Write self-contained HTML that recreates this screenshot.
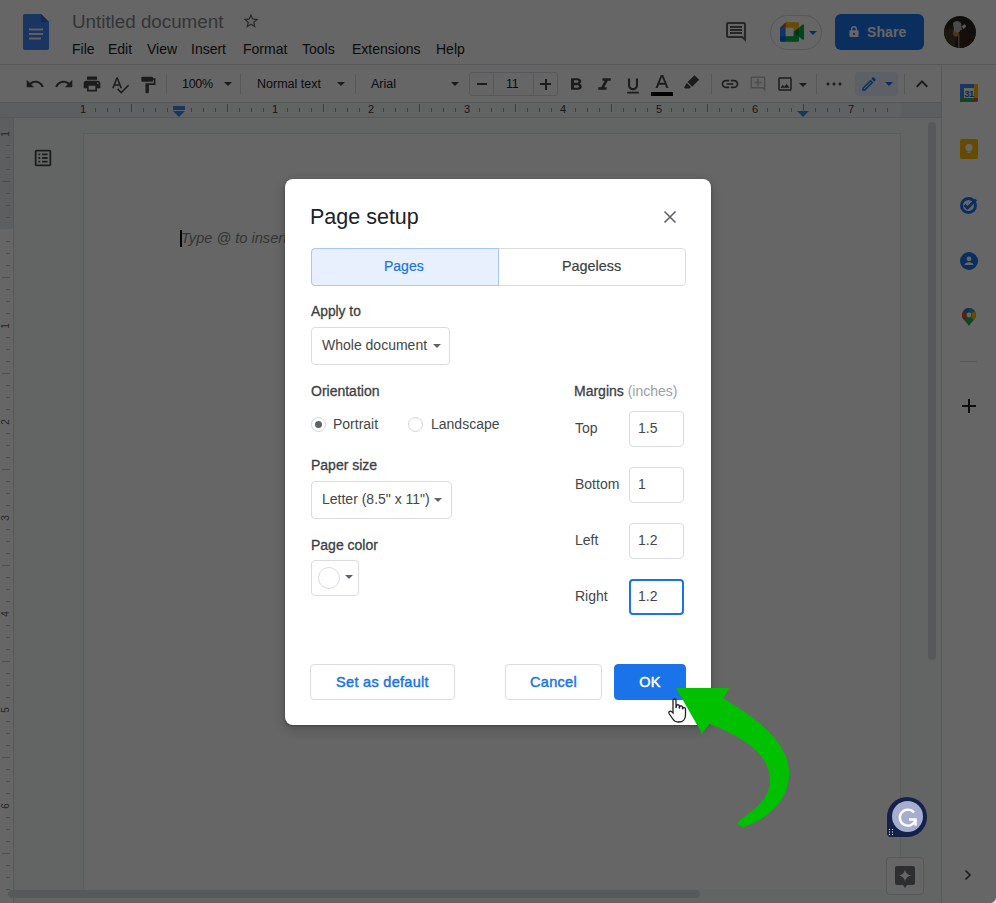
<!DOCTYPE html>
<html><head><meta charset="utf-8">
<style>
*{box-sizing:border-box;margin:0;padding:0}
html,body{width:996px;height:903px;overflow:hidden;background:#f8f9fa;font-family:"Liberation Sans",sans-serif;position:relative}
.a{position:absolute}
svg{display:block}
#hdr{left:0;top:0;width:996px;height:65px;background:#fff;border-bottom:1px solid #dadce0}
#title{left:72px;top:12px;font-size:18.8px;color:#80868b;white-space:nowrap;line-height:20px}
.menu{top:41px;font-size:14px;color:#202124;white-space:nowrap;line-height:16px}
#tb{left:0;top:65px;width:941px;height:38px;background:#fff;border-bottom:1px solid #dadce0}
.sep{width:1px;height:20px;top:74px;background:#dadce0}
.tt{font-size:12.5px;color:#202124;white-space:nowrap;line-height:14px;top:77px}
.dd{width:0;height:0;border-left:4px solid transparent;border-right:4px solid transparent;border-top:4px solid #444}
#ruler{left:0;top:103px;width:941px;height:15px;background:#e8eaed;border-bottom:1px solid #dadce0}
#rpage{left:83px;top:103px;width:818px;height:14px;background:#f1f3f4}
#rcontent{left:179px;top:103px;width:624px;height:14px;background:#f6f7f8}
#vruler{left:0;top:118px;width:14px;height:785px;background:#fff;border-right:1px solid #dadce0}
#vmargin{left:0;top:118px;width:13px;height:111px;background:#e8eaed}
#page{left:83px;top:133px;width:818px;height:756px;background:#fff;border:1px solid #e3e5e8;border-bottom:none}
#side{left:941px;top:65px;width:55px;height:838px;background:#fff;border-left:1px solid #dadce0}
#ov{left:0;top:0;width:996px;height:903px;background:rgba(0,0,0,0.6)}
#dlg{left:285px;top:179px;width:426px;height:546px;background:#fff;border-radius:8px;color:#3c4043;box-shadow:0 1px 3px 0 rgba(0,0,0,.3),0 4px 8px 3px rgba(0,0,0,.12)}
.lbl{font-size:14px;color:#3c4043;white-space:nowrap;line-height:16px;-webkit-text-stroke:0.3px #3c4043}
.txt{font-size:14px;color:#444746;white-space:nowrap;line-height:16px}
.box{border:1px solid #dadce0;border-radius:4px;background:#fff}
.btn{border:1px solid #dadce0;border-radius:4px;background:#fff;color:#1a73e8;font-size:14.5px;text-align:center;line-height:35px;letter-spacing:0.3px;-webkit-text-stroke:0.45px #1a73e8}
.tick{width:1px;background:#9aa0a6}
.rn{width:20px;text-align:center;font-size:11px;line-height:10px;color:#3c4043}
.vn{width:20px;text-align:center;font-size:10px;line-height:10px;color:#5f6368;transform:rotate(-90deg)}
.vt{background:#bdc1c6}
</style></head><body>
<div id="hdr" class="a"></div>
<!-- docs logo -->
<svg class="a" style="left:23px;top:14px" width="26" height="36" viewBox="0 0 26 36">
<path d="M2 0h16l8 8v26a2 2 0 0 1-2 2H2a2 2 0 0 1-2-2V2a2 2 0 0 1 2-2z" fill="#4285f4"/>
<path d="M18 0l8 8h-8z" fill="#3367d6"/>
<rect x="6" y="14.5" width="14" height="2" fill="#f1f1f1"/><rect x="6" y="19" width="14" height="2" fill="#f1f1f1"/><rect x="6" y="23.5" width="12" height="2" fill="#f1f1f1"/>
</svg>
<div id="title" class="a">Untitled document</div>
<svg class="a" style="left:242px;top:12px" width="18" height="18" viewBox="0 0 24 24"><path fill="#5f6368" d="M22 9.24l-7.19-.62L12 2 9.19 8.63 2 9.24l5.46 4.73L5.82 21 12 17.27 18.18 21l-1.63-7.03L22 9.24zM12 15.4l-3.76 2.27 1-4.28-3.32-2.88 4.38-.38L12 6.1l1.71 4.04 4.38.38-3.32 2.88 1 4.28L12 15.4z"/></svg>
<div class="a menu" style="left:72px">File</div>
<div class="a menu" style="left:108px">Edit</div>
<div class="a menu" style="left:147px">View</div>
<div class="a menu" style="left:191px">Insert</div>
<div class="a menu" style="left:243px">Format</div>
<div class="a menu" style="left:302px">Tools</div>
<div class="a menu" style="left:352px">Extensions</div>
<div class="a menu" style="left:436px">Help</div>
<!-- header right -->
<svg class="a" style="left:724px;top:20px" width="24" height="24" viewBox="0 0 24 24"><path fill="#5f6368" d="M21.99 4c0-1.1-.89-2-1.99-2H4c-1.1 0-2 .9-2 2v12c0 1.1.9 2 2 2h14l4 4-.01-18zM20 4v13.17L18.83 16H4V4h16zM6 12h12v2H6zm0-3h12v2H6zm0-3h12v2H6z"/></svg>
<div class="a" style="left:770px;top:15px;width:52px;height:35px;border:1px solid #dadce0;border-radius:18px;background:#fff"></div>
<svg class="a" style="left:780px;top:22px" width="24" height="20" viewBox="0 0 87.5 72"><path fill="#00832d" d="M49.5 36l8.53 9.75 11.47 7.33 2-17.02-2-16.64-11.69 6.44z"/><path fill="#0066da" d="M0 51.5V66c0 3.315 2.685 6 6 6h14.5l3-10.96-3-9.54-9.95-3z"/><path fill="#e94235" d="M20.5 0L0 20.5l10.55 3 9.95-3 2.95-9.41z"/><path fill="#2684fc" d="M20.5 20.5H0v31h20.5z"/><path fill="#00ac47" d="M82.6 8.68L69.5 19.42v33.66l13.16 10.79c1.97 1.54 4.85.135 4.85-2.37V11c0-2.535-2.945-3.925-4.91-2.32zM49.5 36v15.5h-29V72h43c3.315 0 6-2.685 6-6V53.08z"/><path fill="#ffba00" d="M63.5 0h-43v20.5h29V36l20-16.57V6c0-3.315-2.685-6-6-6z"/></svg>
<div class="a dd" style="left:809px;top:31px;border-top-color:#1a73e8"></div>
<div class="a" style="left:835px;top:14px;width:89px;height:36px;background:#1a73e8;border-radius:6px"></div>
<svg class="a" style="left:849px;top:26px" width="10" height="11" viewBox="0 0 10 11"><path fill="#fff" d="M8.6 4.3H8V3a3 3 0 0 0-6 0v1.3h-.6A1 1 0 0 0 .4 5.3v4.7a1 1 0 0 0 1 1h7.2a1 1 0 0 0 1-1V5.3a1 1 0 0 0-1-1zM3.4 3a1.6 1.6 0 0 1 3.2 0v1.3H3.4zM5 9a1.1 1.1 0 1 1 0-2.2A1.1 1.1 0 0 1 5 9z"/></svg>
<div class="a" style="left:867px;top:24px;font-size:14px;font-weight:bold;color:#fff;line-height:16px;letter-spacing:0.1px">Share</div>
<svg class="a" style="left:944px;top:16px" width="32" height="32" viewBox="0 0 32 32"><defs><clipPath id="cav"><circle cx="16" cy="16" r="16"/></clipPath></defs><g clip-path="url(#cav)"><rect width="32" height="32" fill="#2a2520"/><path d="M0 14Q8 10 14 16L10 32H0z" fill="#4a3a2a"/><ellipse cx="12" cy="17" rx="3" ry="3.5" fill="#c08a30"/><path d="M9 7Q13 3 17 7L18 14Q14 18 10 15z" fill="#b8b8b8"/><path d="M18 10l3-2 1 3-3 2z" fill="#e0e0e0"/><path d="M16 14L26 16 32 20V32H18z" fill="#3a2418"/><rect x="14" y="18" width="1.5" height="14" fill="#8a7a6a"/></g></svg>

<!-- toolbar -->
<div id="tb" class="a"></div>
<svg class="a" style="left:25px;top:74px" width="20" height="20" viewBox="0 0 24 24"><path fill="#444746" d="M12.5 8c-2.65 0-5.05.99-6.9 2.6L2 7v9h9l-3.62-3.62c1.39-1.16 3.16-1.88 5.12-1.88 3.54 0 6.55 2.31 7.6 5.5l2.37-.78C21.08 11.03 17.15 8 12.5 8z"/></svg>
<svg class="a" style="left:54px;top:74px" width="20" height="20" viewBox="0 0 24 24"><path fill="#444746" d="M18.4 10.6C16.55 8.99 14.15 8 11.5 8c-4.65 0-8.58 3.03-9.96 7.22L3.9 16c1.05-3.19 4.05-5.5 7.6-5.5 1.95 0 3.73.72 5.12 1.88L13 16h9V7l-3.6 3.6z"/></svg>
<svg class="a" style="left:82px;top:74px" width="20" height="20" viewBox="0 0 24 24"><path fill="#444746" d="M19 8H5c-1.66 0-3 1.34-3 3v6h4v4h12v-4h4v-6c0-1.66-1.34-3-3-3zm-3 11H8v-5h8v5zm3-7c-.55 0-1-.45-1-1s.45-1 1-1 1 .45 1 1-.45 1-1 1zm-1-9H6v4h12V3z"/></svg>
<svg class="a" style="left:110px;top:75px" width="20" height="20" viewBox="0 0 24 24"><path fill="#444746" d="M12.45 16h2.09L9.43 3H7.57L2.46 16h2.09l1.12-3h5.64l1.14 3zm-6.02-5L8.5 5.48 10.57 11H6.43zm15.16.59l-8.09 8.09L9.83 16l-1.41 1.41 5.09 5.09L23 13l-1.41-1.41z"/></svg>
<svg class="a" style="left:138px;top:75px" width="20" height="20" viewBox="0 0 24 24"><path fill="#444746" d="M18 4V3c0-.55-.45-1-1-1H5c-.55 0-1 .45-1 1v4c0 .55.45 1 1 1h12c.55 0 1-.45 1-1V6h1v4H9v11c0 .55.45 1 1 1h2c.55 0 1-.45 1-1v-9h8V4h-3z"/></svg>
<div class="a sep" style="left:166px"></div>
<div class="a tt" style="left:182px;letter-spacing:-0.3px">100%</div>
<div class="a dd" style="left:224px;top:82px"></div>
<div class="a sep" style="left:240px"></div>
<div class="a tt" style="left:257px">Normal text</div>
<div class="a dd" style="left:337px;top:82px"></div>
<div class="a sep" style="left:355px"></div>
<div class="a tt" style="left:371px">Arial</div>
<div class="a dd" style="left:451px;top:82px"></div>
<div class="a" style="left:469px;top:72px;width:89px;height:24px;border:1px solid #dadce0;border-radius:3px"></div>
<div class="a" style="left:493px;top:72px;width:1px;height:24px;background:#dadce0"></div>
<div class="a" style="left:533px;top:72px;width:1px;height:24px;background:#dadce0"></div>
<div class="a" style="left:477px;top:83px;width:10px;height:2px;background:#444746"></div>
<div class="a tt" style="left:506px;top:77px;letter-spacing:-0.3px">11</div>
<div class="a" style="left:540px;top:83px;width:11px;height:2px;background:#444746"></div>
<div class="a" style="left:544.5px;top:78.5px;width:2px;height:11px;background:#444746"></div>
<svg class="a" style="left:564px;top:74.7px" width="24" height="19.7" viewBox="0 0 24 24" preserveAspectRatio="none"><path fill="#444746" d="M15.6 10.79c.97-.67 1.65-1.77 1.65-2.79 0-2.26-1.75-4-4-4H7v14h7.04c2.09 0 3.71-1.7 3.71-3.79 0-1.52-.86-2.82-2.1-3.42zM10 6.5h3c.83 0 1.5.67 1.5 1.5s-.67 1.5-1.5 1.5h-3v-3zm3.5 9H10v-3h3.5c.83 0 1.5.67 1.5 1.5s-.67 1.5-1.5 1.5z"/></svg>
<svg class="a" style="left:592.3px;top:74.7px" width="25" height="19.7" viewBox="0 0 24 24" preserveAspectRatio="none"><path fill="#444746" d="M10 4v3h2.21l-3.42 8H6v3h8v-3h-2.21l3.42-8H18V4z"/></svg>
<svg class="a" style="left:621px;top:76px" width="24" height="20" viewBox="0 0 24 24"><path fill="#444746" d="M12 17c3.31 0 6-2.69 6-6V3h-2.5v8c0 1.93-1.57 3.5-3.5 3.5S8.5 12.93 8.5 11V3H6v8c0 3.31 2.69 6 6 6zm-7 2v2h14v-2H5z"/></svg>
<svg class="a" style="left:651px;top:75px" width="22" height="14" viewBox="0 0 22 14"><path fill="#444746" d="M4.5 13h2.2l1.2-3.3h6.2l1.2 3.3h2.2L12.2 0H9.8zM8.6 7.8L11 1.9l2.4 5.9z"/></svg>
<div class="a" style="left:651px;top:92px;width:22px;height:4px;background:#000"></div>
<svg class="a" style="left:683px;top:74px" width="18" height="16" viewBox="0 0 18 16"><path fill="#444746" d="M11.5 1.2l4.6 4.6-6.9 6.9-4.6-4.6zM3.8 8.9l4.1 4.1-1.4 1.4H2.1l-1-1z"/></svg>
<div class="a sep" style="left:711px"></div>
<svg class="a" style="left:719px;top:74px" width="22" height="20" viewBox="0 0 24 24"><path fill="#444746" d="M3.9 12c0-1.71 1.39-3.1 3.1-3.1h4V7H7c-2.76 0-5 2.24-5 5s2.24 5 5 5h4v-1.9H7c-1.71 0-3.1-1.39-3.1-3.1zM8 13h8v-2H8v2zm9-6h-4v1.9h4c1.71 0 3.1 1.39 3.1 3.1s-1.39 3.1-3.1 3.1h-4V17h4c2.76 0 5-2.24 5-5s-2.24-5-5-5z"/></svg>
<svg class="a" style="left:749px;top:75px" width="18" height="18" viewBox="0 0 24 24"><path fill="#bdc1c6" d="M22 4c0-1.1-.9-2-2-2H4c-1.1 0-1.99.9-1.99 2L2 16c0 1.1.9 2 2 2h14l4 4-.01-18zm-2 13.17L18.83 16H4V4h16v13.17zM13 5h-2v4H7v2h4v4h2v-4h4V9h-4z"/></svg>
<svg class="a" style="left:776px;top:75px" width="18" height="18" viewBox="0 0 24 24"><path fill="#444746" d="M19 5v14H5V5h14m0-2H5c-1.1 0-2 .9-2 2v14c0 1.1.9 2 2 2h14c1.1 0 2-.9 2-2V5c0-1.1-.9-2-2-2zm-4.86 8.86l-3 3.87L9 13.14 6 17h12l-3.86-5.14z"/></svg>
<div class="a dd" style="left:799px;top:83px"></div>
<div class="a sep" style="left:816px"></div>
<svg class="a" style="left:822px;top:72px" width="24" height="24" viewBox="0 0 24 24"><path fill="#444746" d="M6 10.5c-.83 0-1.5.67-1.5 1.5s.67 1.5 1.5 1.5 1.5-.67 1.5-1.5-.67-1.5-1.5-1.5zm12 0c-.83 0-1.5.67-1.5 1.5s.67 1.5 1.5 1.5 1.5-.67 1.5-1.5-.67-1.5-1.5-1.5zm-6 0c-.83 0-1.5.67-1.5 1.5s.67 1.5 1.5 1.5 1.5-.67 1.5-1.5-.67-1.5-1.5-1.5z"/></svg>
<div class="a" style="left:855px;top:72px;width:43px;height:24px;background:#e8f0fe;border-radius:4px"></div>
<svg class="a" style="left:860px;top:75px" width="18" height="18" viewBox="0 0 24 24"><path fill="#1a73e8" d="M14.06 9.02l.92.92L5.92 19H5v-.92l9.06-9.06M17.66 3c-.25 0-.51.1-.7.29l-1.83 1.83 3.75 3.75 1.83-1.83c.39-.39.39-1.02 0-1.41l-2.34-2.34c-.2-.2-.45-.29-.71-.29zm-3.6 3.19L3 17.25V21h3.75L17.81 9.94l-3.75-3.75z"/></svg>
<div class="a dd" style="left:885px;top:82px;border-top-color:#1a73e8"></div>
<div class="a sep" style="left:904px"></div>
<svg class="a" style="left:909.7px;top:72px" width="24" height="24" viewBox="0 0 24 24"><path fill="#444746" d="M12 8l-6 6 1.41 1.41L12 10.83l4.59 4.58L18 14z"/></svg>

<!-- ruler -->
<div id="ruler" class="a"></div>
<div id="rpage" class="a"></div><div id="rcontent" class="a"></div>
<div class="a tick" style="left:95px;top:108px;height:4px"></div>
<div class="a tick" style="left:107px;top:108px;height:4px"></div>
<div class="a tick" style="left:119px;top:108px;height:4px"></div>
<div class="a tick" style="left:131px;top:104px;height:8px"></div>
<div class="a tick" style="left:143px;top:108px;height:4px"></div>
<div class="a tick" style="left:155px;top:108px;height:4px"></div>
<div class="a tick" style="left:167px;top:108px;height:4px"></div>
<div class="a tick" style="left:191px;top:108px;height:4px"></div>
<div class="a tick" style="left:203px;top:108px;height:4px"></div>
<div class="a tick" style="left:215px;top:108px;height:4px"></div>
<div class="a tick" style="left:227px;top:104px;height:8px"></div>
<div class="a tick" style="left:239px;top:108px;height:4px"></div>
<div class="a tick" style="left:251px;top:108px;height:4px"></div>
<div class="a tick" style="left:263px;top:108px;height:4px"></div>
<div class="a tick" style="left:287px;top:108px;height:4px"></div>
<div class="a tick" style="left:299px;top:108px;height:4px"></div>
<div class="a tick" style="left:311px;top:108px;height:4px"></div>
<div class="a tick" style="left:323px;top:104px;height:8px"></div>
<div class="a tick" style="left:335px;top:108px;height:4px"></div>
<div class="a tick" style="left:347px;top:108px;height:4px"></div>
<div class="a tick" style="left:359px;top:108px;height:4px"></div>
<div class="a tick" style="left:383px;top:108px;height:4px"></div>
<div class="a tick" style="left:395px;top:108px;height:4px"></div>
<div class="a tick" style="left:407px;top:108px;height:4px"></div>
<div class="a tick" style="left:419px;top:104px;height:8px"></div>
<div class="a tick" style="left:431px;top:108px;height:4px"></div>
<div class="a tick" style="left:443px;top:108px;height:4px"></div>
<div class="a tick" style="left:455px;top:108px;height:4px"></div>
<div class="a tick" style="left:479px;top:108px;height:4px"></div>
<div class="a tick" style="left:491px;top:108px;height:4px"></div>
<div class="a tick" style="left:503px;top:108px;height:4px"></div>
<div class="a tick" style="left:515px;top:104px;height:8px"></div>
<div class="a tick" style="left:527px;top:108px;height:4px"></div>
<div class="a tick" style="left:539px;top:108px;height:4px"></div>
<div class="a tick" style="left:551px;top:108px;height:4px"></div>
<div class="a tick" style="left:575px;top:108px;height:4px"></div>
<div class="a tick" style="left:587px;top:108px;height:4px"></div>
<div class="a tick" style="left:599px;top:108px;height:4px"></div>
<div class="a tick" style="left:611px;top:104px;height:8px"></div>
<div class="a tick" style="left:623px;top:108px;height:4px"></div>
<div class="a tick" style="left:635px;top:108px;height:4px"></div>
<div class="a tick" style="left:647px;top:108px;height:4px"></div>
<div class="a tick" style="left:671px;top:108px;height:4px"></div>
<div class="a tick" style="left:683px;top:108px;height:4px"></div>
<div class="a tick" style="left:695px;top:108px;height:4px"></div>
<div class="a tick" style="left:707px;top:104px;height:8px"></div>
<div class="a tick" style="left:719px;top:108px;height:4px"></div>
<div class="a tick" style="left:731px;top:108px;height:4px"></div>
<div class="a tick" style="left:743px;top:108px;height:4px"></div>
<div class="a tick" style="left:767px;top:108px;height:4px"></div>
<div class="a tick" style="left:779px;top:108px;height:4px"></div>
<div class="a tick" style="left:791px;top:108px;height:4px"></div>
<div class="a tick" style="left:803px;top:104px;height:8px"></div>
<div class="a tick" style="left:815px;top:108px;height:4px"></div>
<div class="a tick" style="left:827px;top:108px;height:4px"></div>
<div class="a tick" style="left:839px;top:108px;height:4px"></div>
<div class="a tick" style="left:863px;top:108px;height:4px"></div>
<div class="a tick" style="left:875px;top:108px;height:4px"></div>
<div class="a tick" style="left:887px;top:108px;height:4px"></div>
<div class="a rn" style="left:73px;top:104px">1</div>
<div class="a rn" style="left:265px;top:104px">1</div>
<div class="a rn" style="left:361px;top:104px">2</div>
<div class="a rn" style="left:457px;top:104px">3</div>
<div class="a rn" style="left:553px;top:104px">4</div>
<div class="a rn" style="left:649px;top:104px">5</div>
<div class="a rn" style="left:745px;top:104px">6</div>
<div class="a rn" style="left:841px;top:104px">7</div>
<svg class="a" style="left:173px;top:106px" width="12" height="11" viewBox="0 0 12 11"><rect x="0" y="0" width="12" height="4" fill="#4285f4"/><path d="M0 5h12l-6 6z" fill="#4285f4"/></svg>
<svg class="a" style="left:797px;top:111px" width="12" height="6" viewBox="0 0 12 6"><path d="M0 0h12l-6 6z" fill="#4285f4"/></svg>

<!-- canvas -->
<div id="vruler" class="a"></div>
<div id="vmargin" class="a"></div>
<div class="a vt" style="left:6px;top:145px;width:4px;height:1px"></div>
<div class="a vt" style="left:6px;top:157px;width:4px;height:1px"></div>
<div class="a vt" style="left:6px;top:169px;width:4px;height:1px"></div>
<div class="a vt" style="left:2px;top:181px;width:8px;height:1px"></div>
<div class="a vt" style="left:6px;top:193px;width:4px;height:1px"></div>
<div class="a vt" style="left:6px;top:205px;width:4px;height:1px"></div>
<div class="a vt" style="left:6px;top:217px;width:4px;height:1px"></div>
<div class="a vt" style="left:6px;top:241px;width:4px;height:1px"></div>
<div class="a vt" style="left:6px;top:253px;width:4px;height:1px"></div>
<div class="a vt" style="left:6px;top:265px;width:4px;height:1px"></div>
<div class="a vt" style="left:2px;top:277px;width:8px;height:1px"></div>
<div class="a vt" style="left:6px;top:289px;width:4px;height:1px"></div>
<div class="a vt" style="left:6px;top:301px;width:4px;height:1px"></div>
<div class="a vt" style="left:6px;top:313px;width:4px;height:1px"></div>
<div class="a vt" style="left:6px;top:337px;width:4px;height:1px"></div>
<div class="a vt" style="left:6px;top:349px;width:4px;height:1px"></div>
<div class="a vt" style="left:6px;top:361px;width:4px;height:1px"></div>
<div class="a vt" style="left:2px;top:373px;width:8px;height:1px"></div>
<div class="a vt" style="left:6px;top:385px;width:4px;height:1px"></div>
<div class="a vt" style="left:6px;top:397px;width:4px;height:1px"></div>
<div class="a vt" style="left:6px;top:409px;width:4px;height:1px"></div>
<div class="a vt" style="left:6px;top:433px;width:4px;height:1px"></div>
<div class="a vt" style="left:6px;top:445px;width:4px;height:1px"></div>
<div class="a vt" style="left:6px;top:457px;width:4px;height:1px"></div>
<div class="a vt" style="left:2px;top:469px;width:8px;height:1px"></div>
<div class="a vt" style="left:6px;top:481px;width:4px;height:1px"></div>
<div class="a vt" style="left:6px;top:493px;width:4px;height:1px"></div>
<div class="a vt" style="left:6px;top:505px;width:4px;height:1px"></div>
<div class="a vt" style="left:6px;top:529px;width:4px;height:1px"></div>
<div class="a vt" style="left:6px;top:541px;width:4px;height:1px"></div>
<div class="a vt" style="left:6px;top:553px;width:4px;height:1px"></div>
<div class="a vt" style="left:2px;top:565px;width:8px;height:1px"></div>
<div class="a vt" style="left:6px;top:577px;width:4px;height:1px"></div>
<div class="a vt" style="left:6px;top:589px;width:4px;height:1px"></div>
<div class="a vt" style="left:6px;top:601px;width:4px;height:1px"></div>
<div class="a vt" style="left:6px;top:625px;width:4px;height:1px"></div>
<div class="a vt" style="left:6px;top:637px;width:4px;height:1px"></div>
<div class="a vt" style="left:6px;top:649px;width:4px;height:1px"></div>
<div class="a vt" style="left:2px;top:661px;width:8px;height:1px"></div>
<div class="a vt" style="left:6px;top:673px;width:4px;height:1px"></div>
<div class="a vt" style="left:6px;top:685px;width:4px;height:1px"></div>
<div class="a vt" style="left:6px;top:697px;width:4px;height:1px"></div>
<div class="a vt" style="left:6px;top:721px;width:4px;height:1px"></div>
<div class="a vt" style="left:6px;top:733px;width:4px;height:1px"></div>
<div class="a vt" style="left:6px;top:745px;width:4px;height:1px"></div>
<div class="a vt" style="left:2px;top:757px;width:8px;height:1px"></div>
<div class="a vt" style="left:6px;top:769px;width:4px;height:1px"></div>
<div class="a vt" style="left:6px;top:781px;width:4px;height:1px"></div>
<div class="a vt" style="left:6px;top:793px;width:4px;height:1px"></div>
<div class="a vt" style="left:6px;top:817px;width:4px;height:1px"></div>
<div class="a vt" style="left:6px;top:829px;width:4px;height:1px"></div>
<div class="a vt" style="left:6px;top:841px;width:4px;height:1px"></div>
<div class="a vt" style="left:2px;top:853px;width:8px;height:1px"></div>
<div class="a vt" style="left:6px;top:865px;width:4px;height:1px"></div>
<div class="a vt" style="left:6px;top:877px;width:4px;height:1px"></div>
<div class="a vt" style="left:6px;top:889px;width:4px;height:1px"></div>
<div class="a vn" style="left:-4px;top:129px">1</div>
<div class="a vn" style="left:-4px;top:321px">1</div>
<div class="a vn" style="left:-4px;top:417px">2</div>
<div class="a vn" style="left:-4px;top:513px">3</div>
<div class="a vn" style="left:-4px;top:609px">4</div>
<div class="a vn" style="left:-4px;top:705px">5</div>
<div class="a vn" style="left:-4px;top:801px">6</div>
<div id="page" class="a"></div>
<svg class="a" style="left:32px;top:147px" width="22" height="22" viewBox="0 0 24 24"><path fill="#444746" d="M19 3H5c-1.1 0-2 .9-2 2v14c0 1.1.9 2 2 2h14c1.1 0 2-.9 2-2V5c0-1.1-.9-2-2-2zm0 16H5V5h14v14zM7 7h2v2H7zm0 4h2v2H7zm0 4h2v2H7zm4-8h6v2h-6zm0 4h6v2h-6zm0 4h6v2h-6z"/></svg>
<div class="a" style="left:181px;top:230px;font-size:14.6px;font-style:italic;color:#80868b;white-space:nowrap;line-height:17px">Type @ to insert</div>
<div class="a" style="left:180px;top:230px;width:2px;height:17px;background:#000"></div>
<div class="a" style="left:928px;top:122px;width:8px;height:538px;background:#dadce0;border-radius:4px"></div>
<div class="a" style="left:8px;top:890px;width:692px;height:8px;background:#dadce0;border-radius:4px"></div>
<div class="a" style="left:886px;top:857px;width:38px;height:38px;border:1px solid #dadce0;border-radius:4px;background:#fff"></div>
<svg class="a" style="left:895px;top:866px" width="20" height="22" viewBox="0 0 20 22"><path fill="#707478" d="M2 0h16a2 2 0 0 1 2 2v15a2 2 0 0 1-2 2h-6l-2 3-2-3H2a2 2 0 0 1-2-2V2a2 2 0 0 1 2-2z"/><path fill="#fff" d="M10 3.5Q10.8 8.7 16 9.5 10.8 10.3 10 15.5 9.2 10.3 4 9.5 9.2 8.7 10 3.5z"/></svg>

<!-- side panel -->
<div id="side" class="a"></div>
<svg class="a" style="left:960px;top:84px" width="18" height="18" viewBox="0 0 18 18"><rect x="0" y="0" width="18" height="18" rx="1.5" fill="#4285f4"/><rect x="0" y="0" width="14" height="14" fill="#fff"/><rect x="14" y="0" width="4" height="14" fill="#fbbc04"/><rect x="0" y="14" width="14" height="4" fill="#34a853"/><path d="M14 14h4l-4 4z" fill="#ea4335"/><rect x="0" y="0" width="4" height="14" fill="#4285f4"/><rect x="0" y="0" width="14" height="4" fill="#4285f4"/><text x="9" y="12.8" font-size="9.5" font-family="Liberation Sans" text-anchor="middle" fill="#1967d2" font-weight="bold" letter-spacing="-0.5">31</text></svg>
<svg class="a" style="left:960px;top:139px" width="18" height="20" viewBox="0 0 18 20"><rect x="0" y="0" width="18" height="20" rx="2" fill="#fbbc04"/><circle cx="9" cy="8.5" r="3.5" fill="#fff"/><rect x="7.5" y="12.5" width="3" height="1.5" fill="#fff"/></svg>
<svg class="a" style="left:959px;top:195px" width="20" height="20" viewBox="0 0 20 20"><circle cx="9.5" cy="10.5" r="7" fill="none" stroke="#1a73e8" stroke-width="3"/><path d="M5.5 10l3 3 8.5-8.5" fill="none" stroke="#1a73e8" stroke-width="3"/></svg>
<svg class="a" style="left:960px;top:252px" width="18" height="18" viewBox="0 0 18 18"><circle cx="9" cy="9" r="9" fill="#1a73e8"/><circle cx="9" cy="6.8" r="2.4" fill="#fff"/><path d="M4.5 13c0-1.8 2.6-2.7 4.5-2.7s4.5.9 4.5 2.7z" fill="#fff"/></svg>
<svg class="a" style="left:962px;top:308px" width="14" height="18" viewBox="0 0 14 18"><path d="M7 0a7 7 0 0 1 7 7c0 4-4 6-7 11C4 13 0 11 0 7a7 7 0 0 1 7-7z" fill="#34a853"/><path d="M2 2.2A7 7 0 0 1 7 0v4a3 3 0 0 0-2.3 1z" fill="#1a73e8"/><path d="M0 7a7 7 0 0 1 2-4.8L4.7 5A3 3 0 0 0 4 7c0 1 .5 1.7 1 2.3L2 12C.7 10.6 0 9 0 7z" fill="#ea4335"/><path d="M7 0a7 7 0 0 1 6 3.4L9.3 5A3 3 0 0 0 7 4z" fill="#4285f4"/><path d="M14 7a7 7 0 0 0-1-3.6L9.3 5A3 3 0 0 1 10 7c0 1-.5 1.7-1 2.3L12 12c1.3-1.4 2-3 2-5z" fill="#fbbc04"/><circle cx="7" cy="7" r="2.4" fill="#fff"/></svg>
<div class="a" style="left:960px;top:361px;width:17px;height:1px;background:#dadce0"></div>
<div class="a" style="left:962px;top:405px;width:14px;height:2px;background:#202124"></div>
<div class="a" style="left:968px;top:399px;width:2px;height:14px;background:#202124"></div>
<svg class="a" style="left:962px;top:869px" width="12" height="12" viewBox="0 0 12 12"><path d="M3.5 1.5l4.5 4.5-4.5 4.5" fill="none" stroke="#3c4043" stroke-width="1.5"/></svg>

<div id="ov" class="a"></div>

<!-- dialog -->
<div id="dlg" class="a"></div>
<div class="a" style="left:310px;top:205px;font-size:21.5px;color:#202124;white-space:nowrap;line-height:24px">Page setup</div>
<svg class="a" style="left:662px;top:209px" width="16" height="16" viewBox="0 0 16 16"><path d="M2.5 2.5l11 11M13.5 2.5l-11 11" stroke="#5f6368" stroke-width="1.6"/></svg>
<div class="a" style="left:311px;top:248px;width:375px;height:38px;border:1px solid #dadce0;border-radius:4px;background:#fff;overflow:hidden">
  <div class="a" style="left:0;top:0;width:187px;height:36px;background:#e8f0fe;border-right:1px solid #a8c7fa"></div>
</div>
<div class="a" style="left:311px;top:248px;width:188px;height:38px;border:1px solid #a8c7fa;border-radius:4px 0 0 4px"></div>
<div class="a" style="left:384px;top:258px;font-size:14px;color:#1a73e8;white-space:nowrap;line-height:16px;-webkit-text-stroke:0.2px #1a73e8">Pages</div>
<div class="a" style="left:562px;top:258px;font-size:14.4px;color:#3c4043;white-space:nowrap;line-height:16px;-webkit-text-stroke:0.2px #3c4043">Pageless</div>

<div class="a lbl" style="left:311px;top:304px;font-size:13.8px">Apply to</div>
<div class="a box" style="left:311px;top:327px;width:139px;height:38px"></div>
<div class="a txt" style="left:322px;top:337px">Whole document</div>
<div class="a dd" style="left:433px;top:344px;border-top-color:#5f6368"></div>

<div class="a lbl" style="left:311px;top:383px">Orientation</div>
<div class="a" style="left:311px;top:417px;width:15px;height:15px;border:1px solid #d2d5d9;border-radius:50%"></div>
<div class="a" style="left:315px;top:421px;width:7px;height:7px;background:#5f6368;border-radius:50%"></div>
<div class="a txt" style="left:333px;top:416px">Portrait</div>
<div class="a" style="left:408px;top:417px;width:15px;height:15px;border:1px solid #d2d5d9;border-radius:50%"></div>
<div class="a txt" style="left:431px;top:416px">Landscape</div>

<div class="a lbl" style="left:311px;top:457px">Paper size</div>
<div class="a box" style="left:311px;top:481px;width:141px;height:38px"></div>
<div class="a txt" style="left:322px;top:491px">Letter (8.5" x 11")</div>
<div class="a dd" style="left:434px;top:498px;border-top-color:#5f6368"></div>

<div class="a lbl" style="left:311px;top:537px">Page color</div>
<div class="a box" style="left:311px;top:560px;width:48px;height:36px"></div>
<div class="a" style="left:318px;top:567px;width:22px;height:22px;border:1px solid #dadce0;border-radius:50%"></div>
<div class="a dd" style="left:345px;top:575px;border-top-color:#5f6368"></div>

<div class="a lbl" style="left:574px;top:383px">Margins <span style="color:#9aa0a6;-webkit-text-stroke:0">(inches)</span></div>
<div class="a txt" style="left:575px;top:420px">Top</div>
<div class="a box" style="left:629px;top:411px;width:55px;height:36px"></div>
<div class="a txt" style="left:638px;top:420px">1.5</div>
<div class="a txt" style="left:575px;top:476px">Bottom</div>
<div class="a box" style="left:629px;top:467px;width:55px;height:36px"></div>
<div class="a txt" style="left:638px;top:476px">1</div>
<div class="a txt" style="left:575px;top:532px">Left</div>
<div class="a box" style="left:629px;top:523px;width:55px;height:36px"></div>
<div class="a txt" style="left:638px;top:532px">1.2</div>
<div class="a txt" style="left:575px;top:588px">Right</div>
<div class="a box" style="left:629px;top:579px;width:55px;height:36px;border:2px solid #1a73e8"></div>
<div class="a txt" style="left:638px;top:588px">1.2</div>

<div class="a btn" style="left:310px;top:664px;width:145px;height:36px">Set as default</div>
<div class="a btn" style="left:505px;top:664px;width:97px;height:36px">Cancel</div>
<div class="a btn" style="left:614px;top:664px;width:72px;height:36px;background:#1a73e8;border-color:#1a73e8;color:#fff;-webkit-text-stroke:0.45px #fff">OK</div>

<!-- cursor hand -->
<svg class="a" style="left:666.5px;top:698px" width="20" height="26" viewBox="0 0 20 26"><path d="M6 2.5a1.5 1.5 0 0 1 3 0V10l.5-2a1.4 1.4 0 0 1 2.8.3V10.5l.4-1.5a1.4 1.4 0 0 1 2.8.4v1.8l.3-.8a1.4 1.4 0 0 1 2.7.6V17c0 4-2.5 7-6.5 7H11c-2.5 0-4-1.3-5.2-3L2 15.5a1.6 1.6 0 0 1 2.3-2.1L6 15z" fill="#fff" stroke="#202124" stroke-width="1.3"/></svg>

<!-- green arrow -->
<svg class="a" style="left:0;top:0" width="996" height="903" viewBox="0 0 996 903"><path fill="#00c000" d="M676 688 L729 688 L723.5 698.3 C752 716 789 740 789 773 C789 800 770 817 745 826.5 C740 828 736 824 739 821 C752 811 770 800 770 780 C770 755 745 738 709.8 723.7 L702 733.5 Z"/></svg>

<!-- grammarly -->
<div class="a" style="left:887px;top:797px;width:40px;height:40px;background:#15214a;border-radius:50% 50% 50% 4px"></div>
<div class="a" style="left:892px;top:801px;width:31px;height:31px;background:#a6aed0;border-radius:50%"></div>
<svg class="a" style="left:895px;top:804px" width="26" height="26" viewBox="0 0 26 26"><path d="M19 8.5A8 8 0 1 0 20.5 16" fill="none" stroke="#fff" stroke-width="2.4"/><path d="M14 15.5h6.5v6" fill="none" stroke="#fff" stroke-width="2.4"/></svg>
<svg class="a" style="left:888px;top:828px" width="6" height="8" viewBox="0 0 6 8"><g fill="#fff"><rect x="1" y="1" width="1" height="1"/><rect x="4" y="1" width="1" height="1"/><rect x="1" y="3.5" width="1" height="1"/><rect x="4" y="3.5" width="1" height="1"/><rect x="1" y="6" width="1" height="1"/><rect x="4" y="6" width="1" height="1"/></g></svg>
<div class="a" style="left:990px;top:897px;width:6px;height:6px;background:radial-gradient(circle at 0 0,rgba(0,0,0,0) 5.5px,#e0e0e0 6.5px)"></div>
</body></html>
